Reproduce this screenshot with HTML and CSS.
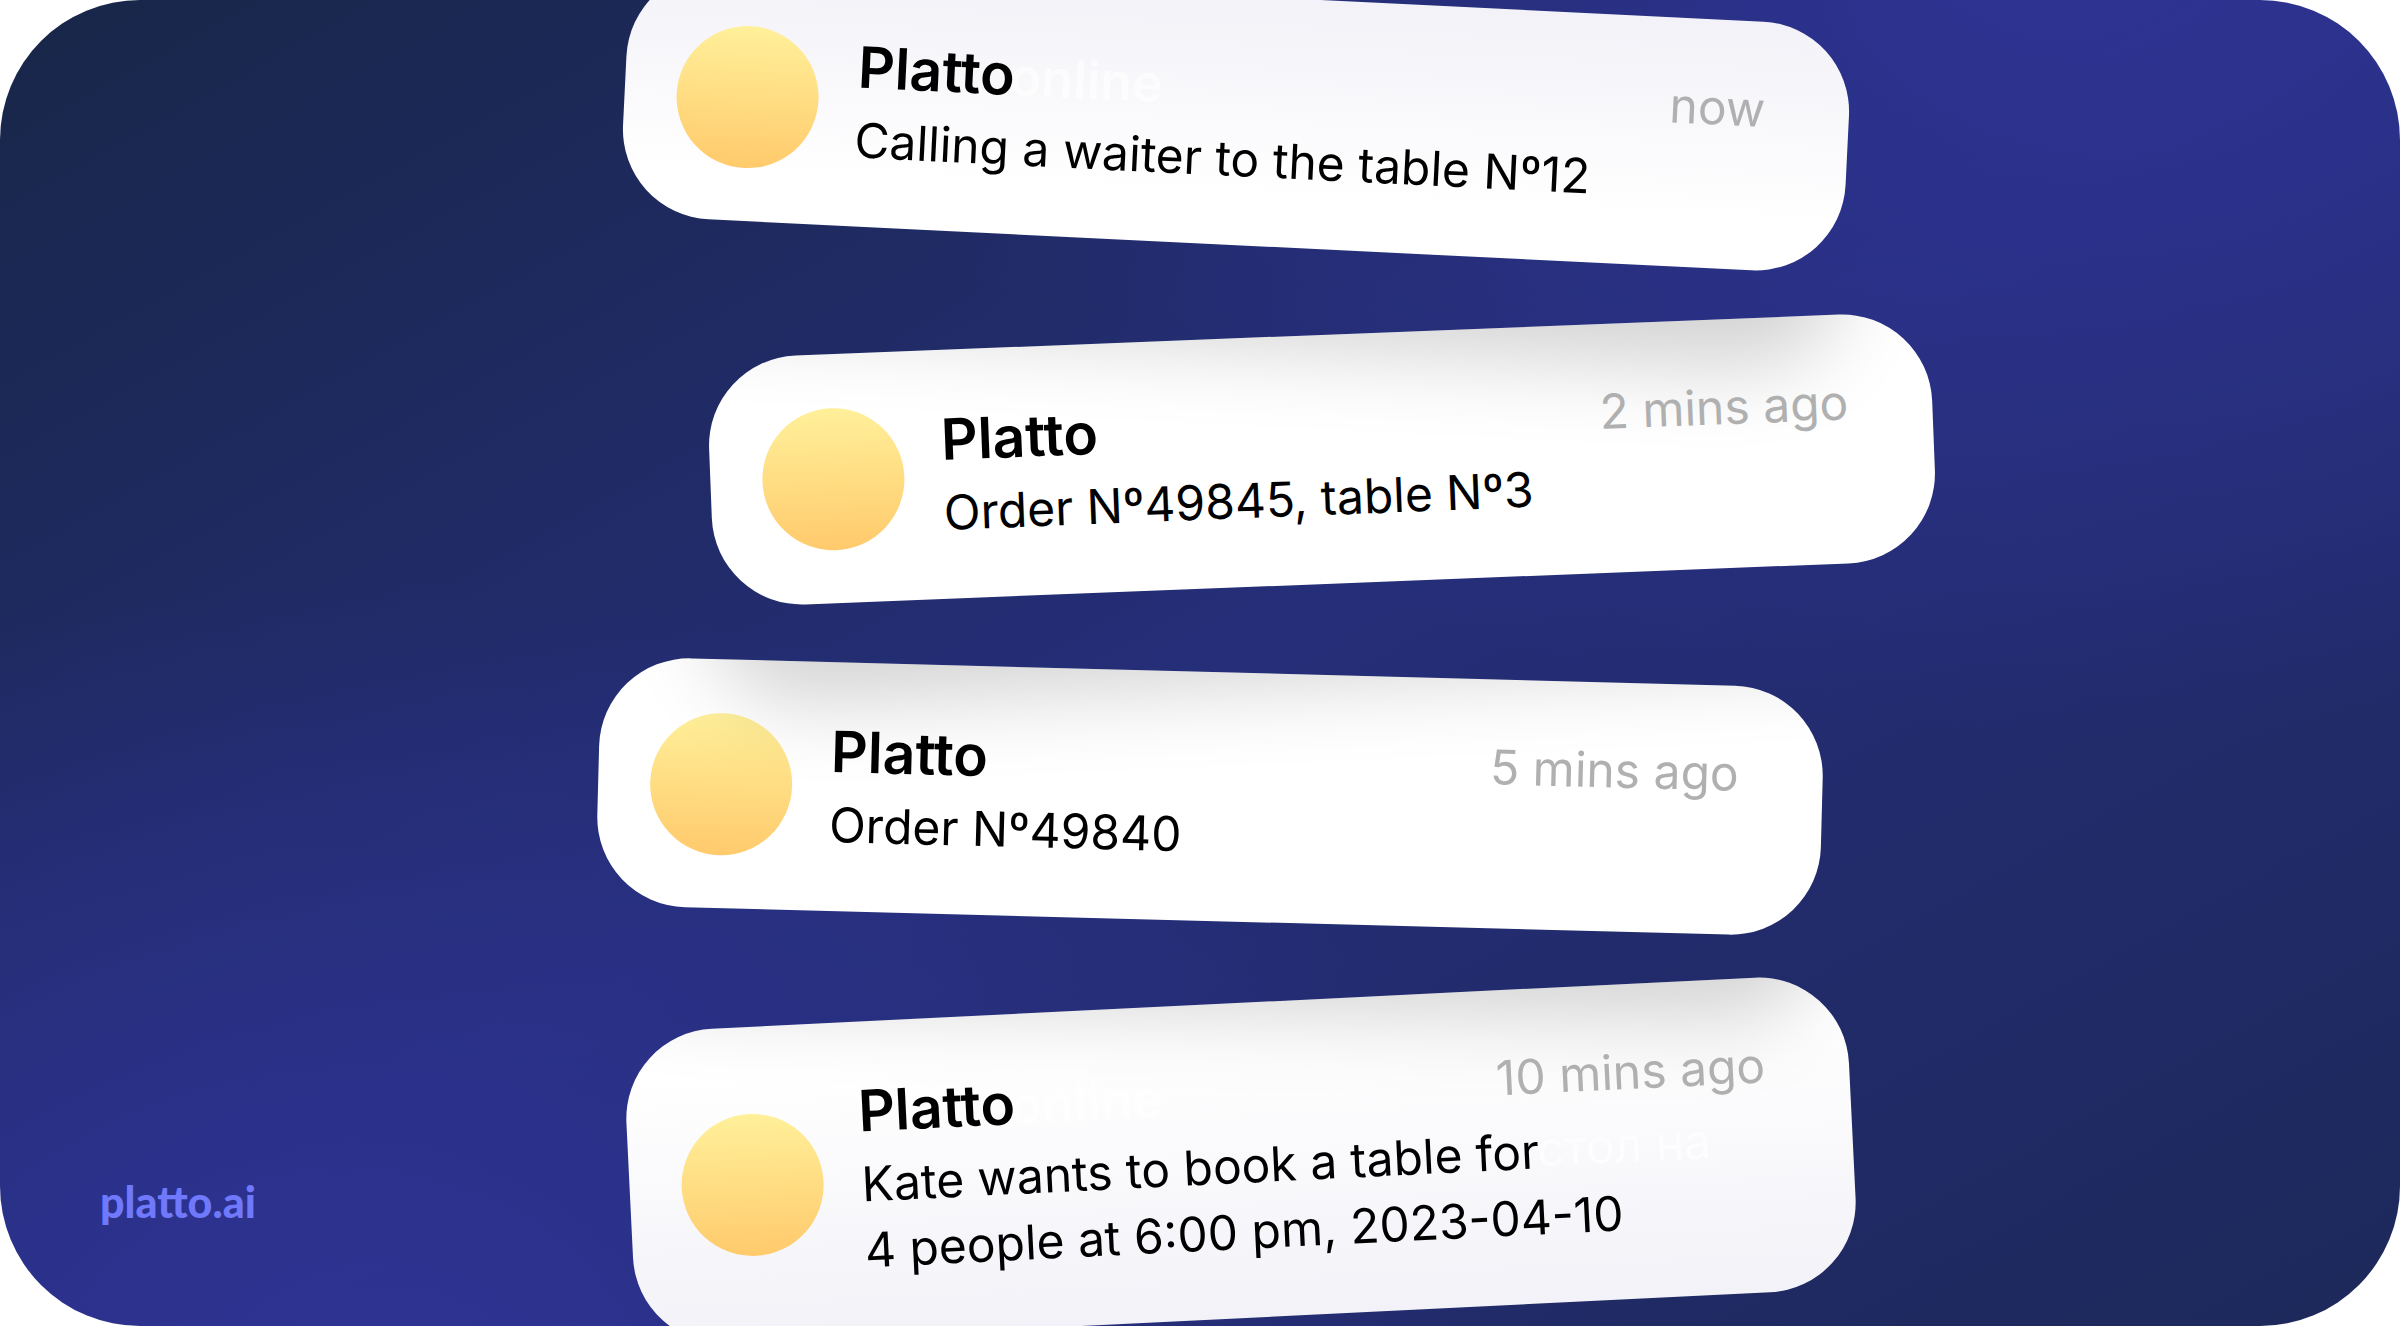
FILE: index.html
```html
<!DOCTYPE html>
<html lang="en">
<head>
  <meta charset="UTF-8" />
  <meta name="viewport" content="width=device-width, initial-scale=1" />
  <title>Platto notifications</title>
  <link rel="stylesheet" href="styles.css">
</head>
<body>
  <main class="stage">
    <div class="stack">
      <article class="card card-waiter">
        <div class="avatar"></div>
        <div class="content">
          <h2>Platto</h2>
          <p>Calling a waiter to the table Nº12</p>
        </div>
        <time>now</time>
        <span class="ghost ghost-title" aria-hidden="true">online</span>
      </article>

      <article class="card card-order-table">
        <div class="avatar"></div>
        <div class="content">
          <h2>Platto</h2>
          <p>Order Nº49845, table Nº3</p>
        </div>
        <time>2 mins ago</time>
      </article>

      <article class="card card-order">
        <div class="avatar"></div>
        <div class="content">
          <h2>Platto</h2>
          <p>Order Nº49840</p>
        </div>
        <time>5 mins ago</time>
      </article>

      <article class="card card-booking">
        <div class="avatar"></div>
        <div class="content">
          <h2>Platto</h2>
          <p>Kate wants to book a table for<br>4 people at 6:00 pm, 2023-04-10</p>
        </div>
        <time>10 mins ago</time>
        <span class="ghost ghost-title" aria-hidden="true">online</span>
        <span class="ghost ghost-text" aria-hidden="true">стол на</span>
      </article>
    </div>

    <a class="site" href="#">platto.ai</a>
  </main>
</body>
</html>
```
FILE: styles.css
```css
* {
  box-sizing: border-box;
}

body {
  margin: 0;
  background: white;
  font-family: Inter, "Liberation Sans", sans-serif;
}

.stage {
  position: relative;
  display: flex;
  flex-direction: column;
  height: 100vh;
  overflow: hidden;
  border-radius: 140px;
  background:
    radial-gradient(ellipse 50% 60% at 86% -4%, #2e3394, rgba(46, 51, 148, 0)),
    radial-gradient(ellipse 50% 60% at 16% 104%, #2e3394, rgba(46, 51, 148, 0)),
    linear-gradient(to bottom right, #182648, #252e78 50%, #1d285a);
}

.stack {
  display: flex;
  flex-direction: column;
  margin-top: -4px;
}

.card {
  position: relative;
  display: flex;
  flex-shrink: 0;
  align-items: center;
  gap: 38px;
  width: 51%;
  padding: 54px 84px 53px 52px;
  border-radius: 90px;
  background: white;
  overflow: hidden;
}

/* shadow of the card above, kept inside this card */
.card::before {
  content: "";
  position: absolute;
  top: -340px;
  width: 100%;
  height: 249px;
  border-radius: 90px;
  box-shadow: 0 95px 85px rgba(0, 0, 0, 0.18);
}

.card-waiter {
  margin-left: 26%;
  background: linear-gradient(#f2f2f8, white 80%);
  transform: rotate(2.8deg);
}

.card-waiter::before {
  display: none;
}

.card-order-table {
  margin-top: 90px;
  margin-left: 29.6%;
  transform: rotate(-2.25deg);
}

.card-order-table::before {
  left: -6%;
  transform: rotate(5deg);
}

.card-order {
  margin-top: 88px;
  margin-left: 24.9%;
  transform: rotate(1.5deg);
}

.card-order::before {
  left: 8%;
  transform: rotate(-4deg);
}

.card-booking {
  margin-top: 82px;
  margin-left: 26.2%;
  background: linear-gradient(white 15%, #f2f2f8);
  transform: rotate(-2.8deg);
}

.card-booking::before {
  left: -1%;
  transform: rotate(4deg);
}

.avatar {
  flex-shrink: 0;
  width: 142px;
  height: 142px;
  border-radius: 50%;
  background: linear-gradient(#fff09a, #ffca6c);
}

.content {
  position: relative;
  z-index: 1;
  flex: 1;
  min-width: 0;
  padding-top: 4px;
  white-space: nowrap;
}

h2 {
  margin: 0 0 8px;
  font-size: 57px;
  font-weight: 600;
  line-height: 64px;
}

p {
  margin: 0;
  font-size: 48px;
  line-height: 66px;
}

time {
  position: relative;
  align-self: flex-start;
  color: #b0b0b0;
  font-size: 48px;
  line-height: 68px;
  white-space: nowrap;
}

.ghost {
  position: absolute;
  color: rgba(255, 255, 255, 0.6);
  white-space: nowrap;
}

.ghost-title {
  top: 60px;
  left: 384px;
  font-size: 52px;
  font-weight: 600;
  line-height: 64px;
}

.ghost-text {
  top: 128px;
  left: 908px;
  font-size: 48px;
  line-height: 66px;
}

.site {
  position: absolute;
  bottom: 100px;
  left: 100px;
  color: #7078fb;
  font-family: Lato, sans-serif;
  font-size: 43px;
  font-weight: 900;
  line-height: 48px;
  text-decoration: none;
}
```
